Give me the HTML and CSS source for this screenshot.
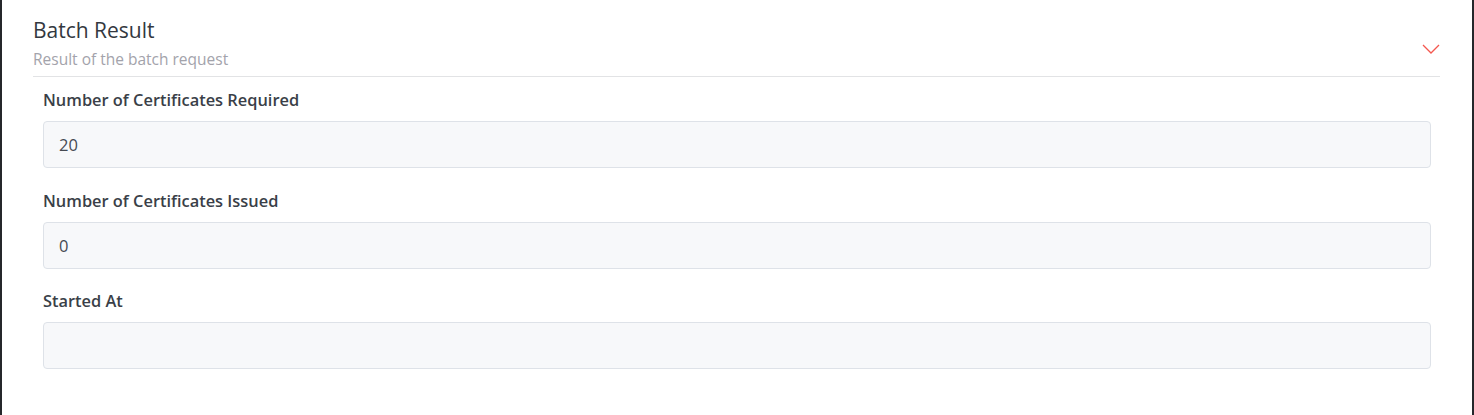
FILE: index.html
```html
<!DOCTYPE html>
<html>
<head>
<meta charset="utf-8">
<link rel="stylesheet" href="styles.css">
</head>
<body>
<div class="frame">
  <section class="panel">
    <header class="panel-head">
      <div class="head-text">
        <h2 class="title">Batch Result</h2>
        <p class="subtitle">Result of the batch request</p>
      </div>
      <svg class="chevron" width="18" height="10" viewBox="0 0 18 10"><polyline points="1,1 9,9 17,1" fill="none" stroke="#f4574f" stroke-width="1.3"/></svg>
    </header>
    <div class="fields">
      <div class="field">
        <label class="label">Number of Certificates Required</label>
        <div class="input">20</div>
      </div>
      <div class="field">
        <label class="label">Number of Certificates Issued</label>
        <div class="input">0</div>
      </div>
      <div class="field">
        <label class="label">Started At</label>
        <div class="input"></div>
      </div>
    </div>
  </section>
</div>
</body>
</html>
```

FILE: styles.css
```css
html, body {
  margin: 0;
  padding: 0;
  background: #fff;
}
body {
  font-family: "Open Sans", "Noto Sans", sans-serif;
}
.frame {
  box-sizing: border-box;
  width: 1474px;
  height: 415px;
  border-left: 2px solid #25272b;
  border-right: 2px solid #25272b;
  background: #fff;
}
.panel {
  padding: 0 32px 0 31px;
}
.panel-head {
  display: flex;
  align-items: flex-end;
  justify-content: space-between;
  border-bottom: 1px solid #e2e3e5;
  height: 77px;
  box-sizing: border-box;
}
.title {
  margin: 0;
  padding-top: 12px;
  font-size: 21px;
  font-weight: 400;
  line-height: 28px;
  color: #333840;
}
.subtitle {
  margin: 4px 0 6px;
  font-size: 15.5px;
  line-height: 22px;
  color: #a3a3ab;
}
.chevron {
  margin-bottom: 22px;
}
.fields {
  padding: 11px 9px 0 10px;
}
.field {
  margin-bottom: 20.5px;
}
.label {
  display: block;
  font-size: 16.4px;
  font-weight: 600;
  line-height: 24px;
  color: #3a3f48;
  margin-bottom: 9px;
}
.input {
  box-sizing: border-box;
  height: 47px;
  background: #f7f8fa;
  border: 1px solid #dee2e8;
  border-radius: 4px;
  padding: 0 15px;
  font-size: 16.5px;
  line-height: 45px;
  color: #454a52;
}
```
